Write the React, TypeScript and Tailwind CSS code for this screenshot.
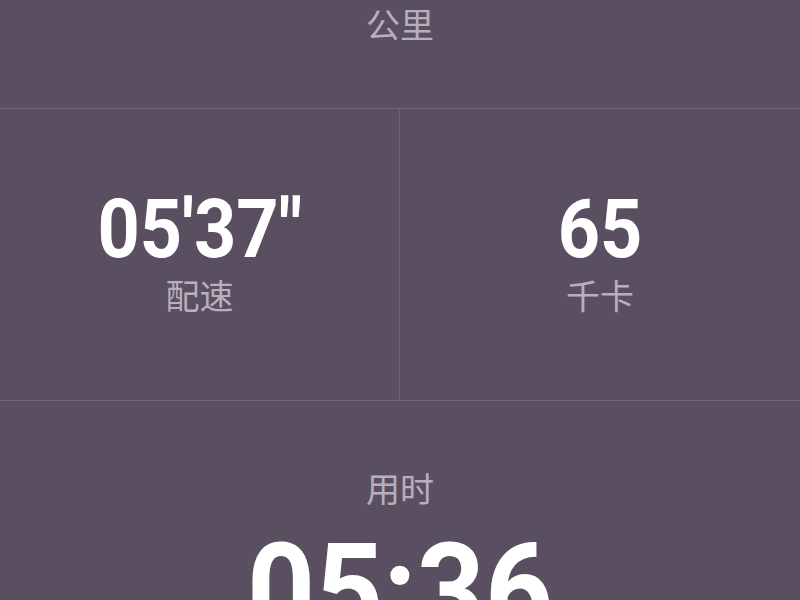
const num = { fontFamily: 'Roboto, "DejaVu Sans Condensed", sans-serif' };
const cjk = { fontFamily: '"Noto Sans CJK SC", "Noto Sans", sans-serif' };

function Stat({ value, label }: { value: string; label: string }) {
  return (
    <div className="flex flex-col items-center">
      <div style={num} className="text-[82px] font-bold leading-none text-white scale-x-[0.9]">
        {value}
      </div>
      <div style={cjk} className="mt-[8px] text-[34px] leading-none text-[#b8aebd]">
        {label}
      </div>
    </div>
  );
}

export default function App() {
  return (
    <div className="w-[800px] h-[600px] overflow-hidden bg-[#5a4f61]">
      {/* distance unit */}
      <div className="h-[109px] border-b border-[#6e6476] flex justify-center pt-[7px]">
        <span style={cjk} className="text-[34px] leading-none text-[#b8aebd]">公里</span>
      </div>

      {/* pace / calories */}
      <div className="h-[292px] grid grid-cols-2 border-b border-[#6e6476]">
        <div className="border-r border-[#6e6476] flex items-start justify-center pt-[79px]">
          <Stat value={`05'37"`} label="配速" />
        </div>
        <div className="flex items-start justify-center pt-[79px]">
          <Stat value="65" label="千卡" />
        </div>
      </div>

      {/* duration */}
      <div className="flex flex-col items-center pt-[70px]">
        <span style={cjk} className="text-[34px] leading-none text-[#b8aebd]">用时</span>
        <span style={num} className="mt-[21px] text-[132px] font-bold leading-none text-white scale-x-[0.9]">
          05:36
        </span>
      </div>
    </div>
  );
}
